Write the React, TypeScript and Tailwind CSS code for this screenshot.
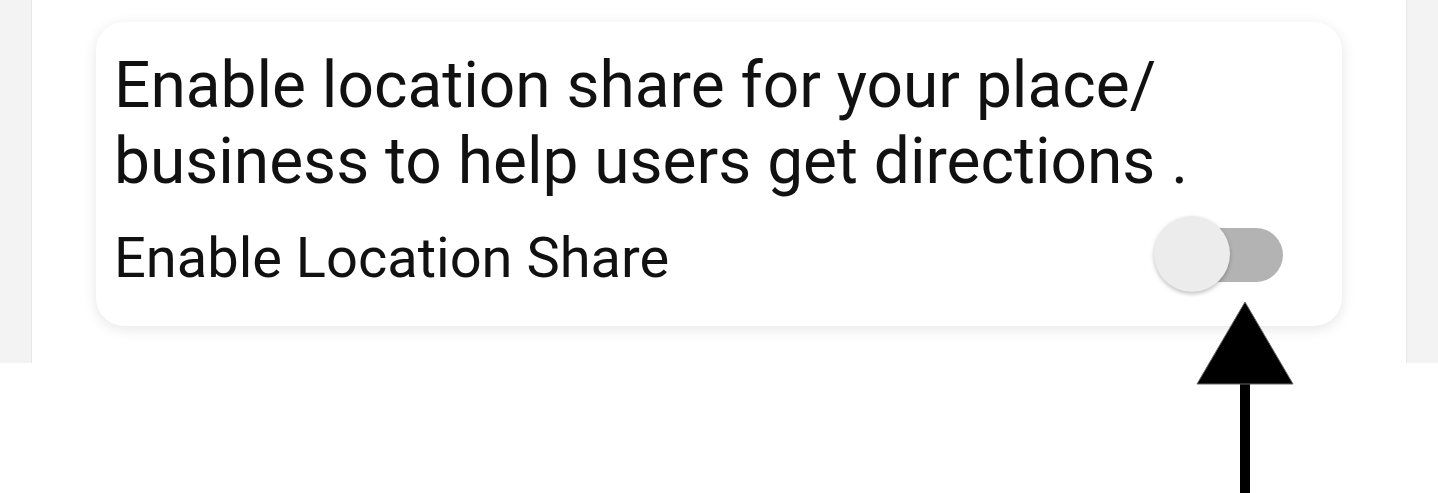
import React, { useState } from 'react';

const LocationShareCard: React.FC = () => {
  const [enabled, setEnabled] = useState(false);

  return (
    <div className="mx-[64px] h-[304px] rounded-[28px] bg-white px-[18px] pt-[26px] shadow-[0_3px_14px_rgba(0,0,0,0.10)]">
      <p className="text-[64px] leading-[76px] text-[#111]">
        Enable location share for your place/ business to help users get directions .
      </p>
      <div className="mt-[16px] flex items-center justify-between pr-[41px]">
        <span className="text-[56px] leading-[62px] text-[#111]">Enable Location Share</span>
        <button
          onClick={() => setEnabled(!enabled)}
          className="relative mb-[6px] h-[78px] w-[129px]"
        >
          <span
            className={`absolute right-0 top-[12px] h-[54px] w-[116px] rounded-full ${
              enabled ? 'bg-[#8fc9a8]' : 'bg-[#b3b3b3]'
            }`}
          />
          <span
            className={`absolute top-0 h-[76px] w-[76px] rounded-full shadow-[0_2px_4px_rgba(0,0,0,0.25)] ${
              enabled ? 'right-0 bg-[#2e9e5e]' : 'left-0 bg-[#ececec]'
            }`}
          />
        </button>
      </div>
    </div>
  );
};

const App: React.FC = () => {
  return (
    <div className="relative h-[493px] w-[1438px] overflow-hidden bg-white font-['Roboto',sans-serif]">
      <div className="h-[363px] bg-[#f3f3f3] px-[31px]">
        <div className="h-full border-x border-[#e8e8e8] bg-white pt-[22px]">
          <LocationShareCard />
        </div>
      </div>

      {/* annotation arrow pointing at the switch */}
      <svg
        className="absolute left-[1196px] top-[301px]"
        width="98"
        height="192"
        viewBox="0 0 98 192"
      >
        <rect x="44" y="80" width="10" height="112" fill="#000" />
        <polygon points="49,1 1,83 97,83" fill="#000" stroke="#666" strokeWidth="1" />
      </svg>
    </div>
  );
};

export default App;
